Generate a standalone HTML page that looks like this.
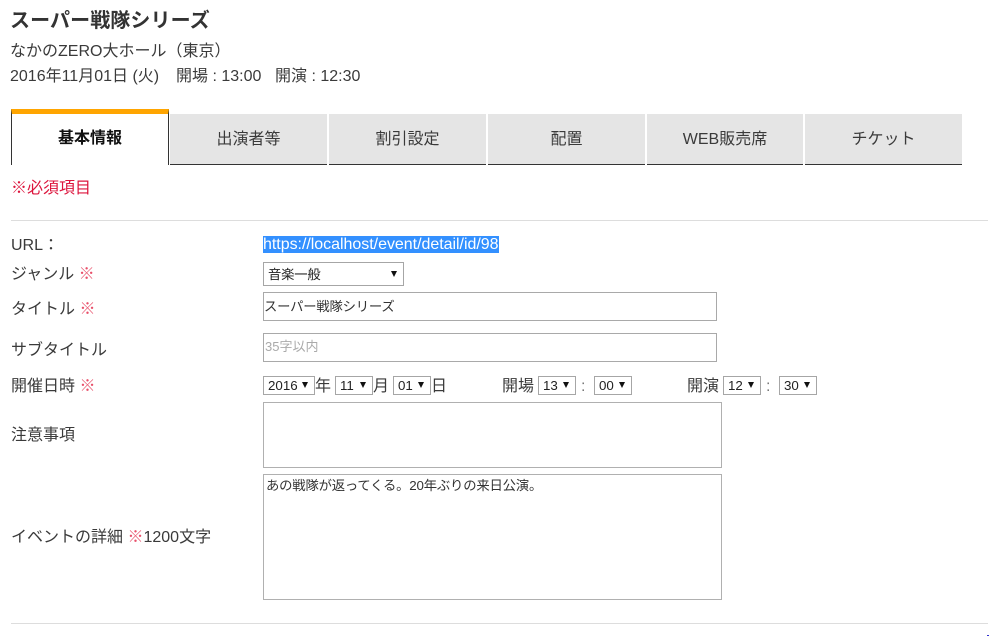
<!DOCTYPE html>
<html lang="ja">
<head>
<meta charset="utf-8">
<title>スーパー戦隊シリーズ</title>
<style>
html,body{margin:0;padding:0;background:#fff;}
body{width:989px;height:637px;position:relative;overflow:hidden;font-family:"Liberation Sans","Noto Sans CJK JP",sans-serif;color:#3a3a3a;font-size:16px;}
.t{position:absolute;white-space:nowrap;line-height:20px;}
.r{color:#e8506a;}
.tab{position:absolute;top:114px;height:50px;background:#e5e5e5;border-bottom:1px solid #333;text-align:center;line-height:51px;font-size:16px;color:#3a3a3a;}
.box{position:absolute;box-sizing:border-box;border:1px solid #a9a9a9;background:#fff;}
.b2{border:1px solid #b0b0b0;}
.sel{position:absolute;box-sizing:border-box;border:1px solid #a6a6a6;background:#fff;color:#222;font-size:13.33px;line-height:17px;white-space:nowrap;padding-left:4px;}
.sel svg{position:absolute;top:5px;right:6px;width:6px;height:6px;}
.hr{position:absolute;left:11px;width:977px;height:1px;background:#ddd;}
</style>
</head>
<body>
<div class="t" style="left:10px;top:11px;font-size:20px;font-weight:bold;color:#333;letter-spacing:.1px;">スーパー戦隊シリーズ</div>
<div class="t" style="left:10px;top:42px;">なかのZERO大ホール（東京）</div>
<div class="t" style="left:10px;top:67px;">2016年11月01日 (火)</div>
<div class="t" style="left:176px;top:67px;">開場 : 13:00</div>
<div class="t" style="left:275px;top:67px;">開演 : 12:30</div>

<div style="position:absolute;left:11px;top:109px;width:158px;height:56px;box-sizing:border-box;border-top:5px solid #ffa500;border-left:1px solid #333;border-right:1px solid #333;background:#fff;text-align:center;line-height:50px;font-weight:bold;color:#111;">基本情報</div>
<div class="tab" style="left:170px;width:157px;">出演者等</div>
<div class="tab" style="left:329px;width:157px;">割引設定</div>
<div class="tab" style="left:488px;width:157px;">配置</div>
<div class="tab" style="left:647px;width:156px;">WEB販売席</div>
<div class="tab" style="left:805px;width:157px;">チケット</div>

<div class="t" style="left:11px;top:179px;color:#dc143c;">※必須項目</div>
<div class="hr" style="top:220px;"></div>

<div class="t" style="left:11px;top:236px;">URL：</div>
<div class="t" style="left:263px;top:236px;height:17px;line-height:17px;background:#3390ff;color:#fff;letter-spacing:-.03px;">https://localhost/event/detail/id/98</div>

<div class="t" style="left:11px;top:265px;">ジャンル <span class="r">※</span></div>
<div class="sel" style="left:263px;top:262px;width:141px;height:24px;line-height:23px;letter-spacing:-.2px;">音楽一般<svg style="top:8px;" viewBox="0 0 6 6"><path d="M0 0H6L3 6Z" fill="#111"/></svg></div>

<div class="t" style="left:11px;top:300px;">タイトル <span class="r">※</span></div>
<div class="box" style="left:263px;top:292px;width:454px;height:29px;"></div>
<div class="t" style="left:264px;top:297px;font-size:13.33px;letter-spacing:-.2px;color:#333;">スーパー戦隊シリーズ</div>

<div class="t" style="left:11px;top:341px;">サブタイトル</div>
<div class="box" style="left:263px;top:333px;width:454px;height:29px;"></div>
<div class="t" style="left:265px;top:337px;font-size:13px;color:#aaa;">35字以内</div>

<div class="t" style="left:11px;top:377px;">開催日時 <span class="r">※</span></div>
<div class="sel" style="left:263px;top:376px;width:52px;height:19px;">2016<svg viewBox="0 0 6 6"><path d="M0 0H6L3 6Z" fill="#111"/></svg></div>
<div class="t" style="left:315px;top:377px;">年</div>
<div class="sel" style="left:335px;top:376px;width:38px;height:19px;">11<svg viewBox="0 0 6 6"><path d="M0 0H6L3 6Z" fill="#111"/></svg></div>
<div class="t" style="left:373px;top:377px;">月</div>
<div class="sel" style="left:393px;top:376px;width:38px;height:19px;">01<svg viewBox="0 0 6 6"><path d="M0 0H6L3 6Z" fill="#111"/></svg></div>
<div class="t" style="left:431px;top:377px;">日</div>

<div class="t" style="left:502px;top:377px;">開場</div>
<div class="sel" style="left:538px;top:376px;width:38px;height:19px;">13<svg viewBox="0 0 6 6"><path d="M0 0H6L3 6Z" fill="#111"/></svg></div>
<div class="t" style="left:581px;top:377px;color:#777;">:</div>
<div class="sel" style="left:594px;top:376px;width:38px;height:19px;">00<svg viewBox="0 0 6 6"><path d="M0 0H6L3 6Z" fill="#111"/></svg></div>

<div class="t" style="left:687px;top:377px;">開演</div>
<div class="sel" style="left:723px;top:376px;width:38px;height:19px;">12<svg viewBox="0 0 6 6"><path d="M0 0H6L3 6Z" fill="#111"/></svg></div>
<div class="t" style="left:766px;top:377px;color:#777;">:</div>
<div class="sel" style="left:779px;top:376px;width:38px;height:19px;">30<svg viewBox="0 0 6 6"><path d="M0 0H6L3 6Z" fill="#111"/></svg></div>

<div class="t" style="left:11px;top:426px;">注意事項</div>
<div class="box b2" style="left:263px;top:402px;width:459px;height:66px;"></div>

<div class="t" style="left:11px;top:528px;">イベントの詳細 <span class="r">※</span>1200文字</div>
<div class="box b2" style="left:263px;top:474px;width:459px;height:126px;"></div>
<div class="t" style="left:266px;top:476px;font-size:13.33px;letter-spacing:-.18px;color:#333;">あの戦隊が返ってくる。20年ぶりの来日公演。</div>

<div class="hr" style="top:623px;"></div>
<div style="position:absolute;left:987px;top:635px;width:2px;height:1px;background:#3030d0;"></div>
</body>
</html>
